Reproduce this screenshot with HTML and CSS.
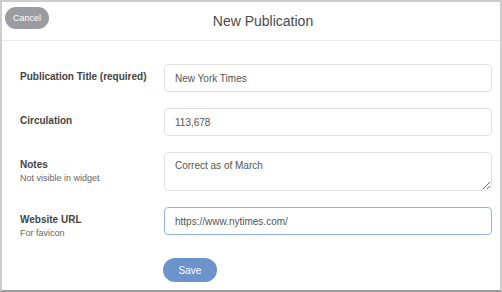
FILE: index.html
```html
<!DOCTYPE html>
<html lang="en">
<head>
    <meta charset="UTF-8">
    <meta name="viewport" content="width=device-width, initial-scale=1.0">
    <title>New Publication</title>
    <link rel="stylesheet" href="styles.css">
</head>
<body>
    <div class="frame">
        <div class="header">
            <button class="cancel-btn">Cancel</button>
            <h1 class="title">New Publication</h1>
        </div>
        <form class="pub-form">
            <label class="field-label" for="pubTitle">Publication Title (required)</label>
            <input class="field-input" id="pubTitle" type="text" value="New York Times">

            <label class="field-label" for="circulation">Circulation</label>
            <input class="field-input" id="circulation" type="text" value="113,678">

            <label class="field-label" for="notes">Notes
                <span class="field-hint">Not visible in widget</span>
            </label>
            <textarea class="field-input field-area" id="notes">Correct as of March</textarea>

            <label class="field-label" for="websiteUrl">Website URL
                <span class="field-hint">For favicon</span>
            </label>
            <input class="field-input field-active" id="websiteUrl" type="text" value="https://www.nytimes.com/">

            <div class="actions">
                <button type="button" class="save-btn">Save</button>
            </div>
        </form>
    </div>
</body>
</html>
```

FILE: styles.css
```css
body {
    margin: 0;
    font-family: "Liberation Sans", Arial, sans-serif;
    background: #fff;
}
.frame {
    width: 502px;
    height: 292px;
    box-sizing: border-box;
    border: 2px solid #cdcdcd;
    border-bottom-color: #9c9c9c;
    background: #fff;
}
.header {
    display: flex;
    align-items: flex-start;
    height: 39px;
    box-sizing: border-box;
    border-bottom: 1px solid #ececec;
}
.cancel-btn {
    margin: 5px 0 0 3px;
    width: 44px;
    height: 22px;
    padding: 0;
    border: none;
    border-radius: 11px;
    background: #9b9ca1;
    color: #fff;
    font-family: inherit;
    font-size: 9px;
}
.title {
    flex: 1;
    align-self: center;
    margin: 0;
    padding-right: 23px;
    text-align: center;
    font-size: 14px;
    font-weight: normal;
    color: #4a4a4a;
}
.pub-form {
    display: grid;
    grid-template-columns: 144px 1fr;
    row-gap: 16px;
    padding: 23px 8px 0 18px;
}
.field-label {
    display: flex;
    flex-direction: column;
    padding-top: 7px;
    font-size: 10px;
    line-height: 12px;
    font-weight: bold;
    color: #444;
}
.field-hint {
    margin-top: 1px;
    font-size: 9px;
    line-height: 12px;
    font-weight: normal;
    color: #666;
}
.field-input {
    height: 28px;
    box-sizing: border-box;
    padding: 0 10px;
    border: 1px solid #e2e2e2;
    border-radius: 4px;
    font-family: inherit;
    font-size: 10px;
    color: #555;
    background: #fff;
    outline: none;
}
.field-area {
    height: 39px;
    padding-top: 7px;
    line-height: 12px;
}
.field-active {
    border-color: #93b3e2;
}
.actions {
    grid-column: 2;
    margin-top: 3px;
    margin-left: -1px;
}
.save-btn {
    width: 54px;
    height: 24px;
    padding: 0;
    border: none;
    border-radius: 12px;
    background: #6c93cb;
    color: #fff;
    font-family: inherit;
    font-size: 10px;
}
```
